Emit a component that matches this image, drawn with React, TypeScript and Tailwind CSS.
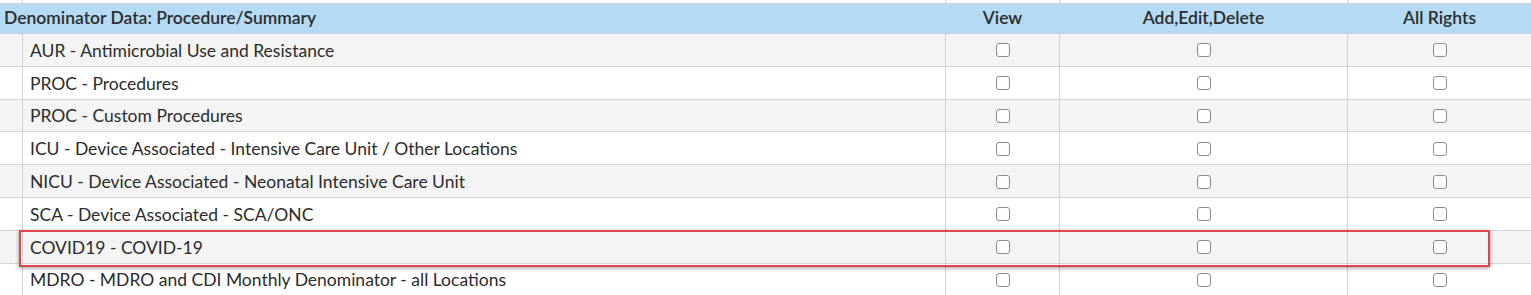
const ROWS = [
  "AUR - Antimicrobial Use and Resistance",
  "PROC - Procedures",
  "PROC - Custom Procedures",
  "ICU - Device Associated - Intensive Care Unit / Other Locations",
  "NICU - Device Associated - Neonatal Intensive Care Unit",
  "SCA - Device Associated - SCA/ONC",
  "COVID19 - COVID-19",
  "MDRO - MDRO and CDI Monthly Denominator - all Locations",
];

const GRID = "grid grid-cols-[23px_923px_114px_288px_1fr]";

function Box() {
  return (
    <span className="block w-[14px] h-[14px] border border-[#8c8c8c] rounded-[3px] bg-white" />
  );
}

function CheckCell({ last }: { last?: boolean }) {
  return (
    <div
      className={`flex items-center justify-center pt-[1px] border-[#d2d2d2] ${
        last ? "" : "border-r"
      }`}
    >
      <Box />
    </div>
  );
}

export default function App() {
  return (
    <div
      className="relative w-[1531px] h-[295px] overflow-hidden bg-white text-[#2c2c2c]"
      style={{ fontFamily: "Lato, 'Open Sans', sans-serif" }}
    >
      {/* tail of the previous table row */}
      <div className={`${GRID} h-[4px] border-b border-[#cfcfcf]`}>
        <div className="border-r border-[#d2d2d2]" />
        <div className="border-r border-[#d2d2d2]" />
        <div className="border-r border-[#d2d2d2]" />
        <div className="border-r border-[#d2d2d2]" />
        <div />
      </div>

      <div className={`${GRID} h-[30px] bg-[#b4dbf3] border-b border-[#c6d3dc] text-[17.5px] font-semibold`}>
        <div className="col-span-2 flex items-center pl-[4px] border-r border-[#d2d2d2]">
          Denominator Data: Procedure/Summary
        </div>
        <div className="flex items-center justify-center border-r border-[#d2d2d2]">View</div>
        <div className="flex items-center justify-center border-r border-[#d2d2d2]">
          Add,Edit,Delete
        </div>
        <div className="flex items-center justify-center">All Rights</div>
      </div>

      {ROWS.map((label, i) => (
        <div
          key={label}
          className={`${GRID} h-[32.8px] border-b border-[#d6d6d6] text-[17.5px] ${
            i % 2 === 0 ? "bg-[#f4f4f4]" : "bg-white"
          }`}
        >
          <div className="border-r border-[#d2d2d2]" />
          <div className="flex items-center pl-[7px] pt-[2px] border-r border-[#d2d2d2]">{label}</div>
          <CheckCell />
          <CheckCell />
          <CheckCell last />
        </div>
      ))}

      <div className="absolute left-[19px] top-[230px] w-[1471px] h-[37px] border-[2.5px] border-[#e3444b] shadow-[0_1px_4px_rgba(0,0,0,0.4)]" />
    </div>
  );
}
